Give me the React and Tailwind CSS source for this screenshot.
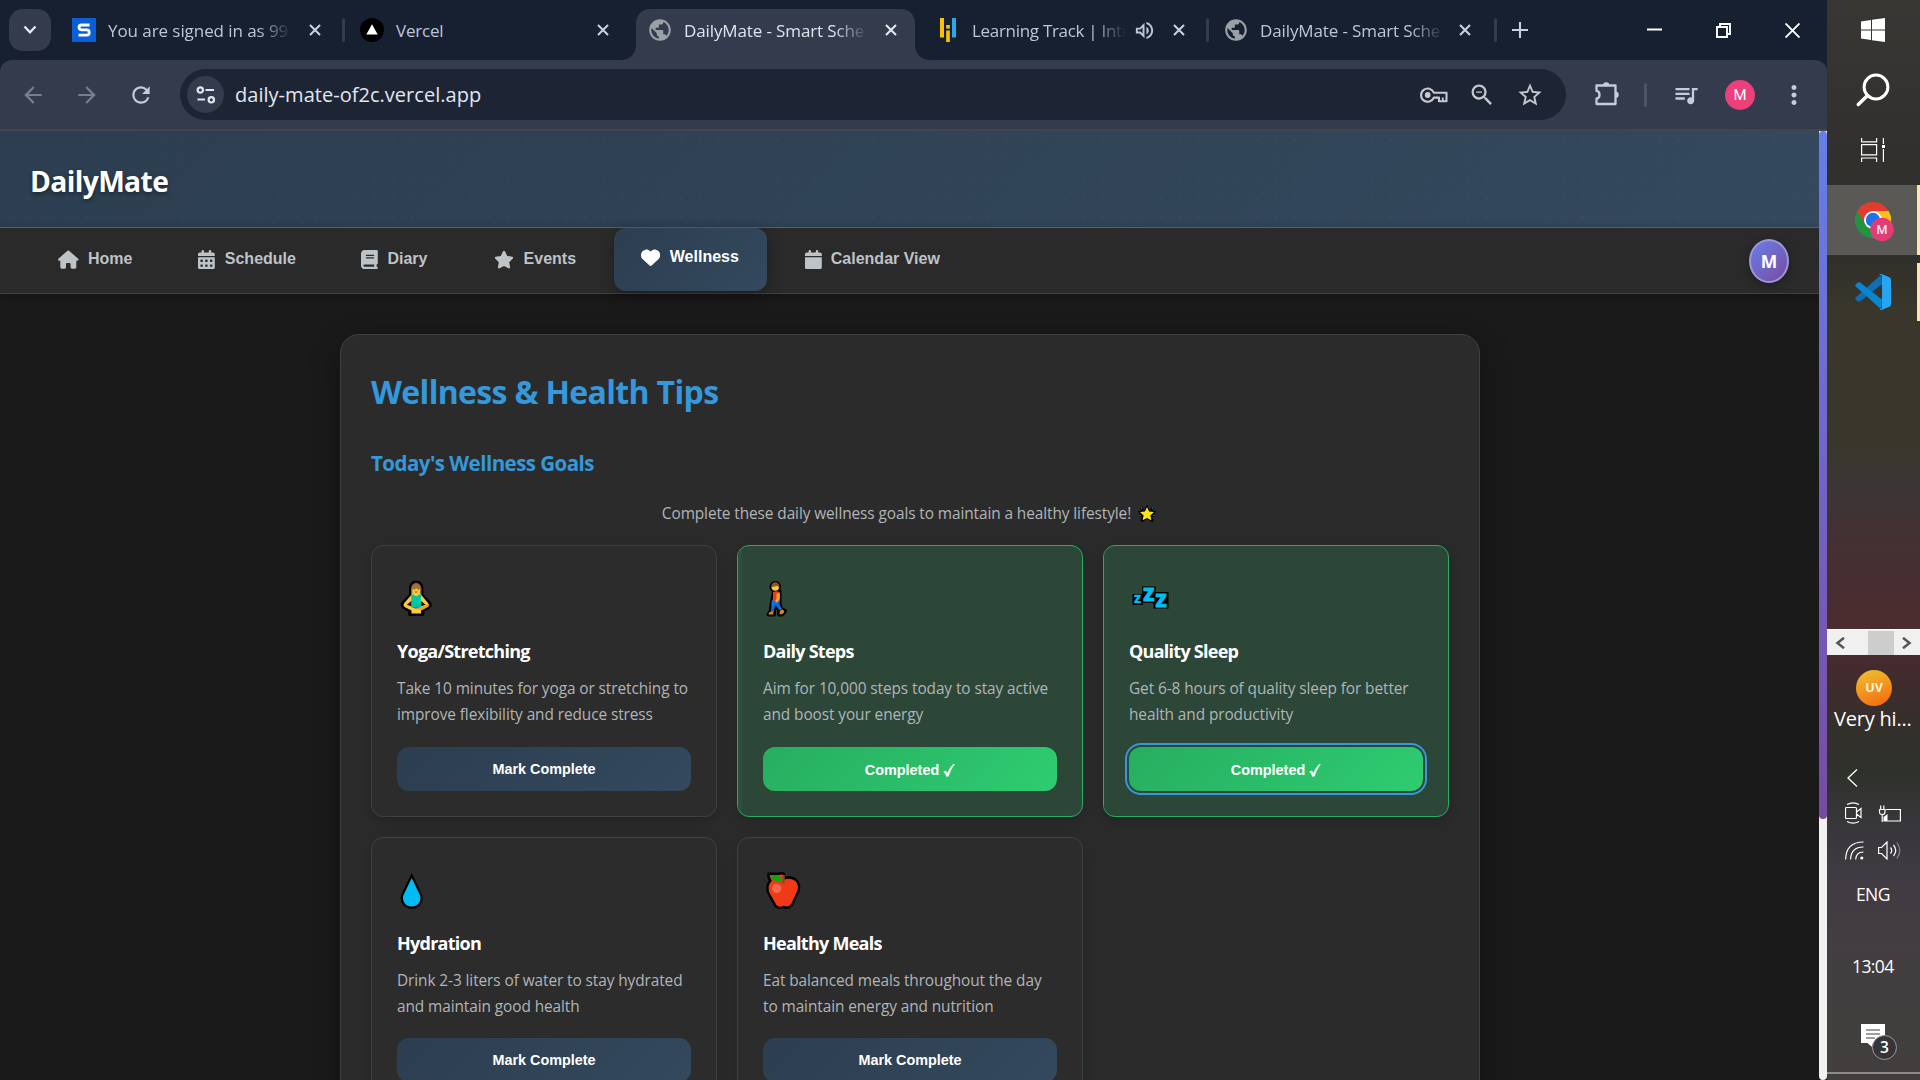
import React from "react";
import { FaHouse, FaCalendarDays, FaBook, FaStar, FaHeart, FaCalendar } from "react-icons/fa6";
import {
  MdArrowBack,
  MdArrowForward,
  MdRefresh,
  MdZoomOut,
  MdOutlineStarBorder,
  MdQueueMusic,
  MdMoreVert,
  MdPublic,
  MdOutlineVolumeUp,
} from "react-icons/md";

const Globe = () => (
  <div className="flex h-6 w-6 items-center justify-center text-[#9aa0a6]">
    <MdPublic className="h-[26px] w-[26px] shrink-0" />
  </div>
);

const CloseX = ({ className }) => (
  <svg viewBox="0 0 12 12" className={"h-3 w-3 shrink-0 " + className}>
    <path d="M1 1l10 10M11 1L1 11" stroke="currentColor" strokeWidth="2.1" />
  </svg>
);

const SqFavicon = () => (
  <svg viewBox="0 0 24 24" className="h-6 w-6">
    <rect width="24" height="24" fill="#0a5fd6" />
    <path d="M17.500 7H9.500Q7 7 7 9.300T9.500 11.800H15Q17.200 11.800 17.200 14.400T15 17.200H6.500" fill="none" stroke="#fff" strokeWidth="2.800" />
  </svg>
);
const VercelFavicon = () => (
  <svg viewBox="0 0 24 24" className="h-6 w-6">
    <circle cx="12" cy="12" r="12" fill="#000" />
    <path d="M12 6.200L17.700 16.600H6.300z" fill="#fff" />
  </svg>
);
const BarsFavicon = () => (
  <svg viewBox="0 0 24 24" className="h-6 w-6">
    <rect x="4" y="0" width="4" height="19.500" fill="#ffc107" />
    <rect x="10.200" y="7" width="3.600" height="3.600" fill="#ffc107" />
    <rect x="10.200" y="12.500" width="3.600" height="11.500" fill="#ffc107" />
    <rect x="16" y="0" width="4" height="19.500" fill="#29a9ea" />
  </svg>
);

function Tab({ icon, title, textWidth = "w-[184px]", tracking, divider, active, audio, last, fade = true }) {
  return (
    <div className="relative flex h-[60px] w-[288px] shrink-0 items-center">
      {active && (
        <div className="absolute top-[9px] bottom-0 left-[6px] w-[279px] rounded-t-[14px] bg-[#333b4c]">
          <div className="absolute bottom-0 -left-[14px] h-[14px] w-[14px] bg-[radial-gradient(circle_at_0_0,transparent_13.5px,#333b4c_14px)]" />
          <div className="absolute -right-[14px] bottom-0 h-[14px] w-[14px] bg-[radial-gradient(circle_at_100%_0,transparent_13.5px,#333b4c_14px)]" />
        </div>
      )}
      <div className={"h-6 w-[3px] rounded-full " + (divider ? "bg-[#333b4c]" : "bg-transparent")} />
      <div className="relative ml-[15px]">{icon}</div>
      <div
        className={
          "relative ml-3 whitespace-nowrap pt-[2px] text-[17px] leading-[62px] " +
          textWidth + " " + tracking + " " +
          (fade ? "[mask-image:linear-gradient(to_right,#000_calc(100%-34px),transparent)] " : "") +
          (active ? "text-[#dfe3ee]" : "text-[#bcc5da]")
        }
      >
        {title}
      </div>
      {audio && <MdOutlineVolumeUp className="ml-[7px] h-[23px] w-[23px] shrink-0 text-[#bcc5da]" />}
      <CloseX className={"relative ml-auto " + (last ? "mr-[23px] " : "mr-[21px] ") + (active ? "text-[#e6e9f2]" : "text-[#c8d0e2]")} />
    </div>
  );
}

function TabStrip() {
  return (
    <div className="flex h-[60px] items-center bg-[#172030]">
      <div className="ml-[9px] flex h-[42px] w-[42px] shrink-0 items-center justify-center rounded-[14px] bg-[#333b4c]">
        <svg viewBox="0 0 14 10" className="h-[10px] w-[14px]">
          <path d="M1.500 1.500L7 7.300l5.500-5.800" fill="none" stroke="#e6e9f2" strokeWidth="2.300" />
        </svg>
      </div>
      <div className="ml-[3px] flex">
        <Tab icon={<SqFavicon />} title="You are signed in as 99" tracking="tracking-[-0.07px]" />
        <Tab icon={<VercelFavicon />} title="Vercel" tracking="tracking-[-0.2px]" divider fade={false} />
        <Tab icon={<Globe />} title="DailyMate - Smart Sche" tracking="tracking-[-0.12px]" active />
        <Tab icon={<BarsFavicon />} title="Learning Track | Intr" tracking="tracking-[-0.3px]" textWidth="w-[154px]" audio />
        <Tab icon={<Globe />} title="DailyMate - Smart Sche" tracking="tracking-[-0.12px]" divider last />
      </div>
      <div className="h-6 w-[3px] rounded-full bg-[#333b4c]" />
      <svg viewBox="0 0 16 16" className="ml-[15px] h-4 w-4">
        <path d="M8 0v16M0 8h16" stroke="#c8d0e2" strokeWidth="2.100" />
      </svg>
      <svg viewBox="0 0 15 15" className="mr-[54px] ml-auto h-[15px] w-[15px]">
        <path d="M0 6.500h15" stroke="#fff" strokeWidth="2" />
      </svg>
      <svg viewBox="0 0 15 15" className="mr-[54px] h-[15px] w-[15px]">
        <path d="M1 4h10v10H1zM4 4V1h10v10h-3" fill="none" stroke="#fff" strokeWidth="1.900" />
      </svg>
      <svg viewBox="0 0 15 15" className="mr-[27px] h-[15px] w-[15px]">
        <path d="M.5.5l14 14M14.500.5l-14 14" stroke="#fff" strokeWidth="1.900" />
      </svg>
    </div>
  );
}

const slot = "flex h-[30px] w-[30px] shrink-0 items-center justify-center";

function Toolbar() {
  return (
    <div className="bg-[#172030]">
      <div className="flex h-[71px] items-start rounded-t-[12px] border-b-2 border-[#42454c] bg-[#333b4c]">
        <div className="flex h-[69px] w-full items-center">
          <div className={slot + " ml-[18px] text-[#767f92]"}><MdArrowBack size={26} /></div>
          <div className={slot + " ml-6 text-[#767f92]"}><MdArrowForward size={26} /></div>
          <div className={slot + " ml-6 text-[#c3cce0]"}><MdRefresh size={26} /></div>
          <div className="ml-6 flex h-[51px] w-[1386px] shrink-0 items-center rounded-full bg-[#1d2535]">
            <div className="ml-[7px] flex h-[37px] w-[37px] items-center justify-center rounded-full bg-[#333b4c]">
              <svg viewBox="0 0 20 18" className="h-[18px] w-5" fill="none" stroke="#e3e6ee" strokeWidth="2.200">
                <circle cx="4.300" cy="4" r="2.700" />
                <path d="M9.500 4H18M1.500 13.500H9" />
                <circle cx="15.300" cy="13.800" r="2.700" />
              </svg>
            </div>
            <div className="ml-[11px] text-[20px] leading-[50px] tracking-[0.03px] text-[#e3e6ee]">daily-mate-of2c.vercel.app</div>
            <div className={slot + " ml-auto"}>
              <svg viewBox="0 0 28 16" className="h-4 w-7" fill="none" stroke="#c7c9ce" strokeWidth="2.100">
                <path d="M13.800 5.700H26.500V14.300H19V10.600H13.800A6.600 6.600 0 1 1 13.800 5.700z" strokeLinejoin="round" />
                <path d="M22.800 14V10.500" strokeWidth="1.800" />
                <circle cx="7.700" cy="8" r="2.900" fill="#c7c9ce" stroke="none" />
              </svg>
            </div>
            <div className={slot + " ml-[18px] text-[#c7c9ce]"}><MdZoomOut size={28} /></div>
            <div className={slot + " mr-[21px] ml-[18px] text-[#c7c9ce]"}><MdOutlineStarBorder size={28} /></div>
          </div>
          <div className={slot + " ml-[26px]"}>
            <svg viewBox="0 0 28 28" className="h-7 w-7 -translate-y-0.5">
              <path
                d="M3.500 6.500h19v18.500H3.500v-5.300c4-.6 4-7.300 0-7.900z"
                fill="none" stroke="#c3cce0" strokeWidth="2.300" strokeLinejoin="round"
              />
              <path d="M10 6.500a3.200 3.200 0 0 1 6.400 0zM22.500 12.500a3.200 3.200 0 0 1 0 6.400z" fill="#c3cce0" />
            </svg>
          </div>
          <div className="ml-[22px] h-6 w-[3px] rounded-full bg-[#4b5366]" />
          <div className={slot + " ml-6 text-[#c3cce0]"}><MdQueueMusic size={28} /></div>
          <div className="ml-6 flex h-[30px] w-[30px] items-center justify-center rounded-full bg-[#ec407a] pt-px font-[Roboto] text-[15px] text-white">M</div>
          <div className={slot + " ml-6 text-[#c3cce0]"}><MdMoreVert size={30} /></div>
        </div>
      </div>
    </div>
  );
}

const navItems = [
  { label: "Home", icon: FaHouse, w: "w-[140px]", iw: "w-[20.6px]", gap: "gap-[9.4px]" },
  { label: "Schedule", icon: FaCalendarDays, w: "w-[163px]", iw: "w-[16.8px]", gap: "gap-[10px]" },
  { label: "Diary", icon: FaBook, w: "w-[133px]", iw: "w-[16.8px]", gap: "gap-[9.6px]" },
  { label: "Events", icon: FaStar, w: "w-[147px]", iw: "w-[20px]", gap: "gap-[9.6px]" },
  { label: "Wellness", icon: FaHeart, active: true, w: "w-[153px]", iw: "w-[19.2px]", gap: "gap-[9.6px]" },
  { label: "Calendar View", icon: FaCalendar, w: "w-[190px]", iw: "w-[16.8px]", gap: "gap-[9px]" },
];

function Nav() {
  return (
    <div className="flex h-[66px] items-start border-b border-[#424242] bg-[#2a2a2a] pl-[31px] shadow-[0_2px_10px_rgba(0,0,0,0.3)]">
      {navItems.map(({ label, icon: Icon, active, w, iw, gap }) => (
        <div
          key={label}
          className={
            "flex shrink-0 items-center pl-[27px] font-['Liberation_Sans',Arial,sans-serif] text-[16px] font-bold " +
            w + " " + gap + " " +
            (active
              ? "mr-[11px] h-[63px] rounded-[12px] bg-linear-135 from-[#2c3e50] to-[#34495e] pb-[5px] text-white shadow-[0_4px_14px_rgba(0,0,0,0.3)]"
              : "h-[61px] text-[#bdc3c7]")
          }
        >
          <Icon className={"h-[19.2px] shrink-0 translate-y-[1px] " + iw} />
          {label}
        </div>
      ))}
      <div className="mt-[11px] mr-[30px] ml-auto flex h-[44px] w-[40px] items-center justify-center rounded-[50%] border-2 border-[#9d96d8] bg-linear-135 from-[#667eea] to-[#764ba2] text-[17.500px] font-bold text-white shadow-[0_2px_10px_rgba(0,0,0,0.3)]">
        M
      </div>
    </div>
  );
}

const emojiCls = "block h-10 w-10 overflow-visible";

const Yoga = () => (
  <svg viewBox="0 0 40 40" className={emojiCls}>
    <g fill="#000" stroke="#000" strokeWidth="4" strokeLinejoin="round">
      <path d="M14 16V9a5.200 5.500 0 0 1 10.400 0v7l8 8.500q1 2-1 3.500l-6 3.500v3.500H13V31.500L7 28q-2-1.500-1-3.500z" />
    </g>
    <path d="M14 16.500V9.500a5.200 5.800 0 0 1 10.400 0v7z" fill="#8f562e" />
    <path d="M15.300 14.500V9.800q4-1 7.800 0v4.700l7.900 9.500q2 2.500-1 4l-6 3.500v3H14.500v-3l-6-3q-3.500-2-1-4.800l7-8z" fill="#ffc83d" />
    <path d="M9.800 25.700l5-4.200v6zM28.600 25.700l-5-4.200v6z" fill="#1a1200" />
    <path d="M14.300 15.500h2.200q2.700 3.500 5.400 0H24v13h-9.700z" fill="#00c8a0" />
    <path d="M14.500 27.800h9.500l-4.500 2.400z" fill="#2d7fe0" />
    <path d="M31 25q2 2-1 3.500l-5.500 2.800-6-1.800 9-2.500z" fill="#f0a400" />
    <path d="M14.800 9.800q-.3-4.500 4.400-4.700 4.600.2 4.400 4.700-4-1.300-8.800 0z" fill="#a56b43" />
    <path d="M16.800 10.300h1.400M20.600 10.300H22M17.800 12.800q1.400.8 2.800 0" stroke="#7a3f10" strokeWidth=".8" fill="none" />
  </svg>
);

const Walker = () => (
  <svg viewBox="0 0 40 40" className={emojiCls}>
    <g fill="#000" stroke="#000" strokeWidth="4" strokeLinejoin="round">
      <circle cx="12.300" cy="7.800" r="3.800" />
      <path d="M11 12.500h5.500V25l1.500 5 4 2-3 3.500h-3v-5l-3-3.500-2 3.500V35.500H5.500l2-3 1.500-9z" />
    </g>
    <path d="M8.500 23q.2-2.500 1.700-3h6.500v4.500l-.2 1 2.500 4.500-2.200 1.500-4.300-5.500-1.500 4-.2 3H8.200z" fill="#0b6fe0" />
    <path d="M10 13q3-1.500 6.800 0v9.500H10z" fill="#f03a17" />
    <path d="M13.500 14.500h3.200v5.500l-3 3.500-1.500-1.300 1.300-2.700z" fill="#ffb02e" />
    <path d="M5.500 35.500q0-2.500 2.800-3l2 .3v2.700zM16.500 35.300l.3-3.300 2.800-1.700 1.800 1.900q-.5 2.100-2.400 3.100z" fill="#d08c12" />
    <circle cx="12.300" cy="8" r="3.800" fill="#ffc83d" />
    <path d="M8.400 8.300q0-5 4-5 4.300.3 3.900 6l-1.400-2.300q-3.500.6-6.500 1.300z" fill="#8f562e" />
  </svg>
);

const Zzz = () => (
  <svg viewBox="0 0 40 40" className={emojiCls}>
    <g fill="#000">
      <path d="M3.500 15h9.500V7.500h14v5.500H39.500v16.500H24.500V24H14v2H3.500z" />
    </g>
    <g fill="#00bcf2" stroke="#00bcf2" fontFamily="Open Sans" fontWeight="800">
      <text x="5.200" y="24.200" fontSize="10.500" strokeWidth=".6">Z</text>
      <text x="14.300" y="22.300" fontSize="18" strokeWidth="1">Z</text>
      <text x="26.600" y="27.800" fontSize="18" strokeWidth="1">Z</text>
    </g>
  </svg>
);

const Drop = () => (
  <svg viewBox="0 0 40 40" className={emojiCls}>
    <path d="M14.700 4.500L6.500 21.500C2 29.500 7.500 36.700 14.700 36.700S27.400 29.500 22.900 21.500z" fill="#00bcf2" stroke="#000" strokeWidth="2.200" />
  </svg>
);

const Apple = () => (
  <svg viewBox="0 0 40 40" className={emojiCls}>
    <path
      d="M5.500 2.800H15l3.500-.5q2.500-.5 2.700 2V7.300Q29 5 33.500 9.500q4 4.500 2 10.500l-6.300 13.800Q26 38 20.500 36q-4.500 2.200-8-1.200L5 21.500Q3.200 13.500 7.500 9.700 5 7 5.500 2.800z"
      fill="#f03a17" stroke="#000" strokeWidth="2.400" strokeLinejoin="round"
    />
    <path d="M6.800 4h5q6.500.3 8 7-10.500 1-13-7z" fill="#13a10e" />
    <path d="M20.500 4v8.500" stroke="#8a4b22" strokeWidth="2.500" />
    <circle cx="13.700" cy="17.500" r="4.600" fill="#f4694e" />
  </svg>
);

const Sparkle = () => (
  <svg viewBox="0 0 18 18" className="h-[18px] w-[18px]">
    <path d="M3 2.500l2 3M15 2.500l-2 3M1 10.500l3.500-.5M17 10.500L13.500 10M5 13.500L3.500 16M13 13.500l1.500 2.500" stroke="#000" strokeWidth="3" />
    <path d="M9 2l2.100 4.500 4.900.6-3.600 3.300 1 4.900L9 12.900l-4.400 2.400 1-4.900L2 7.100l4.900-.6z" fill="#ffe11a" stroke="#000" strokeWidth="2.200" paintOrder="stroke" />
    <path d="M3 2.500l1.200 1.700M15 2.500l-1.200 1.700M1.300 10.700l1.500-.3M16.700 10.700l-1.500-.3" stroke="#1b7fa8" strokeWidth="1.200" />
  </svg>
);

const goals = [
  { icon: <Yoga />, title: "Yoga/Stretching", lines: ["Take 10 minutes for yoga or stretching to", "improve flexibility and reduce stress"] },
  { icon: <Walker />, title: "Daily Steps", lines: ["Aim for 10,000 steps today to stay active", "and boost your energy"], done: true },
  { icon: <Zzz />, title: "Quality Sleep", lines: ["Get 6-8 hours of quality sleep for better", "health and productivity"], done: true, focused: true },
  { icon: <Drop />, title: "Hydration", lines: ["Drink 2-3 liters of water to stay hydrated", "and maintain good health"], low: true },
  { icon: <Apple />, title: "Healthy Meals", lines: ["Eat balanced meals throughout the day", "to maintain energy and nutrition"], low: true },
];

function GoalCard({ icon, title, lines, done, focused, low }) {
  return (
    <div
      className={
        "relative h-[272px] overflow-hidden rounded-[12px] border px-[25px] pt-[33px] shadow-[0_4px_14px_rgba(0,0,0,0.18)] " +
        (done ? "border-[#27ae60] bg-[#2c4637]" : "border-[#404040] bg-[#2c2c2c]")
      }
    >
      {done && <div className={"absolute inset-y-0 left-0 w-1 " + (focused ? "bg-[#2c4a39]" : "bg-[#2c503d]")} />}
      {icon}
      <div className="mt-[18px] text-[18px] leading-7 font-bold tracking-[-0.74px] whitespace-nowrap text-white">{title}</div>
      <div className="mt-[11px] text-[15.400px] leading-[26px] tracking-[-0.085px] whitespace-nowrap text-[#b1b5b8]">
        {lines.map((l) => (
          <div key={l}>{l}</div>
        ))}
      </div>
      <button
        className={
          "flex h-[44px] w-full items-center justify-center rounded-[12px] font-['Liberation_Sans',Arial,sans-serif] text-[14.400px] font-bold text-white " +
          (low ? "mt-[18px] " : "mt-[19px] ") +
          (done ? "bg-linear-135 from-[#27ae60] to-[#2ecc71] pt-[3px] " : "bg-linear-135 from-[#2c3e50] to-[#34495e] pt-[2px] ") +
          (focused ? "outline-2 outline-offset-2 outline-[#3498db]" : "")
        }
      >
        {done ? "Completed" : "Mark Complete"}
        {done && (
          <svg viewBox="0 0 12 13" className="ml-1 h-[13px] w-3 overflow-visible">
            <path d="M.8 7.800L2.900 6.900 4.400 9.600Q6.500 4 10 .6L11.400.4Q8 4.500 5.300 12.200L3.600 12.400Q2.600 9.700.8 7.800z" fill="#fff" stroke="#fff" strokeWidth=".5" />
          </svg>
        )}
      </button>
    </div>
  );
}

function Page() {
  return (
    <div className="h-[949px] w-[1819px] overflow-hidden bg-[#1a1a1a]">
      <div className="h-[97px] border-b border-[#5b6c7b] bg-linear-135 from-[#2c3e50] to-[#34495e]">
        <div className="h-full bg-[radial-gradient(circle_at_9.6px_9.6px,rgba(255,255,255,0.028)_1px,transparent_1.4px)] bg-size-[19.2px_19.2px] pt-[31px] pl-[30px]">
          <div className="text-[28.200px] leading-[38px] font-bold tracking-[-0.6px] text-white [text-shadow:0_2px_4px_rgba(0,0,0,0.4)]">DailyMate</div>
        </div>
      </div>
      <Nav />
      <div className="mt-10 ml-[340px] h-[900px] w-[1140px] rounded-[19px] border border-[#404040] bg-[#2b2b2b] px-[30px] pt-[35px] shadow-[0_8px_32px_rgba(0,0,0,0.3)]">
        <div className="text-[32px] leading-[44px] font-bold text-[#3498db]"><span className="tracking-[-0.66px]">Wellness &amp; Health Tips</span></div>
        <div className="mt-[35px] text-[20.500px] leading-7 font-bold text-[#3498db]"><span className="tracking-[-0.53px]">Today's Wellness Goals</span></div>
        <div className="mt-[24px] flex h-[26px] items-center justify-center pr-[2px] text-[15.400px] leading-[26px] tracking-[-0.09px] text-[#b1b5b8]">
          <span>Complete these daily wellness goals to maintain a healthy lifestyle!</span>
          <span className="ml-[7px]"><Sparkle /></span>
        </div>
        <div className="mt-[18px] grid grid-cols-3 gap-5">
          {goals.map((g) => (
            <GoalCard key={g.title} {...g} />
          ))}
        </div>
      </div>
    </div>
  );
}

function Taskbar() {
  return (
    <div className="flex h-[1080px] w-[93px] flex-col overflow-hidden bg-[linear-gradient(to_bottom,#383734_0px,#32312f_130px,#2f2e2a_250px,#39372b_310px,#39372b_440px,#3b3535_490px,#443032_540px,#4b2c2f_630px,#402b2d_680px,#33302a_730px,#2f312b_770px,#37363a_820px,#403b42_880px,#423e40_960px,#413e3d_1080px)] text-white">
      <div className="flex h-[60px] items-center justify-center pr-px">
        <svg viewBox="0 0 24 24" className="h-6 w-6" fill="#fff">
          <path d="M0 3.400L10 2v9.400H0zM11 1.800L24 0v11.400H11zM0 12.500h10V22L0 20.600zM11 12.500h13V24l-13-1.800z" />
        </svg>
      </div>
      <div className="flex h-[60px] items-center justify-center pr-px">
        <svg viewBox="0 0 34 34" className="h-[34px] w-[34px]" fill="none" stroke="#fff" strokeLinecap="round">
          <circle cx="20" cy="14" r="11.900" strokeWidth="3" />
          <path d="M11.500 22.500L2.300 31.500" strokeWidth="3.400" />
        </svg>
      </div>
      <div className="mb-[5px] flex h-[60px] items-center justify-center pr-px">
        <svg viewBox="0 0 24 24" className="h-6 w-6" fill="none" stroke="#fff" strokeWidth="1.200">
          <path d="M.6 0v3.800h15V0M.6 6.700h15v10.200h-15zM.6 24v-4h15v4M22.400 0v6M22.400 11v13" />
          <rect x="21" y="7" width="3" height="3" fill="#fff" stroke="none" />
        </svg>
      </div>
      <div className="flex h-[70px] items-center border-r-[3px] border-[#f7e9a8] bg-[#5a5955] pt-1 pl-7">
        <svg viewBox="0 0 40 40" className="h-10 w-10">
          <circle cx="18" cy="18" r="18" fill="#229342" />
          <path d="M2.400 9A18 18 0 0 1 33.600 9H18L10.200 22.500z" fill="#e33b2e" />
          <path d="M33.600 9A18 18 0 0 1 18 36L25.800 22.500 18 9z" fill="#fbc116" />
          <circle cx="18" cy="18" r="9" fill="#fff" />
          <circle cx="18" cy="18" r="7.200" fill="#1a73e8" />
          <circle cx="27" cy="27.500" r="11.800" fill="#e23c76" />
          <text x="27" y="32" textAnchor="middle" fontSize="12.500" fontWeight="500" fontFamily="Roboto" fill="#f6e6ec">M</text>
        </svg>
      </div>
      <div className="mt-2 flex h-[58px] items-center border-r-[3px] border-[#f7e9a8] pl-7">
        <svg viewBox="0 0 36 36" className="h-9 w-9">
          <path d="M26 .7L27 10 5 27.500q-1 .7-2 0L.7 25.400q-1-1 0-2z" fill="#0d6fb5" />
          <path d="M.7 12.600q-1-1 0-2L3 8.500q1-.7 2 0L27 25.500 26 35.300z" fill="#0a86d1" />
          <path d="M26.500 0L34.500 3.300Q36 4 36 5.800V30.200Q36 32 34.500 32.700L26.500 36q-1.500.3-2.200-.9 2.700.9 2.700-1.500V2.400Q27 0 24.300.9 25-.3 26.500 0z" fill="#27a5f2" />
        </svg>
      </div>
      <div className="mt-[308px] flex h-[26px] items-center border-t border-white bg-[#f0f0f0]">
        <svg viewBox="0 0 10 12" className="ml-2 h-3 w-[10px]"><path d="M9 .8L2.500 6 9 11.200" fill="none" stroke="#555" strokeWidth="2.500" /></svg>
        <div className="ml-[23px] h-6 w-[26px] bg-[#cdcdcd]" />
        <svg viewBox="0 0 10 12" className="ml-2 h-3 w-[10px]"><path d="M1 .8L7.500 6 1 11.200" fill="none" stroke="#555" strokeWidth="2.500" /></svg>
      </div>
      <div className="mt-[15px] ml-[29px] flex h-9 w-9 items-center justify-center rounded-full bg-linear-160 from-[#edc22e] to-[#f2620f] text-[12.500px] font-bold text-[#fff3d6]">UV</div>
      <div className="ml-[7px] text-[20px] leading-[26px] tracking-[-0.2px] whitespace-nowrap">Very hi...</div>
      <svg viewBox="0 0 11 18" className="mt-[37px] ml-5 h-[18px] w-[11px]"><path d="M10 .5L1 9l9 8.500" fill="none" stroke="#fff" strokeWidth="1.300" /></svg>
      <div className="mt-[15px] flex h-[22px] items-center">
        <svg viewBox="0 0 17 22" className="ml-[18px] h-[22px] w-[17px]" fill="none" stroke="#fff" strokeWidth="1.200">
          <path d="M2 2.500Q8 -.7 14 2.500M2 19.500q6 3.200 12 0M1.500 5.500h9q1 0 1 1v9q0 1-1 1h-9q-1 0-1-1v-9q0-1 1-1zM11.500 10l4.500-3.500v9L11.500 12" />
        </svg>
        <svg viewBox="0 0 23 17" className="ml-4 h-[17px] w-[23px]" fill="none" stroke="#fff" strokeWidth="1.200">
          <path d="M8 4.500h14.400v11.500H5.500M1.500 4.500h5.500v2.500q0 2.500-2.800 2.500T1.500 7zM2.700 4.500V.5M5.800 4.500V.5M4.200 9.500V17" />
          <path d="M5.500 16L5.500 12l4-3v7z" fill="#fff" stroke="none" />
        </svg>
      </div>
      <div className="mt-4 flex h-5 items-center">
        <svg viewBox="0 0 19 19" className="ml-[18px] h-[19px] w-[19px]" fill="none" stroke="#fff" strokeWidth="1.200">
          <path d="M.6 18.500Q1 1 18.500 1M5.600 18.500Q6 6 18.500 6M10.600 18.500q.5-7.500 7.900-7.500" />
          <circle cx="16.800" cy="17" r="1.600" fill="#fff" stroke="none" />
        </svg>
        <svg viewBox="0 0 23 19" className="ml-[14px] h-[19px] w-[23px]" fill="none" stroke="#fff" strokeWidth="1.200">
          <path d="M.6 6.500h3L9 1v17l-5.400-5.500h-3zM12.500 6.500q2.500 3 0 6M15.500 4q4.500 5.500 0 11" />
          <path d="M18.800 1.500q6 8 0 16" stroke="#8a8a8e" />
        </svg>
      </div>
      <div className="mt-[21px] ml-[29px] text-[17.500px] leading-[26px] tracking-[-0.6px]">ENG</div>
      <div className="mt-[46px] ml-[25px] text-[17.500px] leading-[26px] tracking-[-0.6px]">13:04</div>
      <div className="relative mt-[45px] ml-[34px] h-[37px] w-[37px]">
        <svg viewBox="0 0 24 24" className="h-6 w-6">
          <path d="M0 0h24v19H12l-1 4-4.500-4H0z" fill="#fff" />
          <path d="M5 6h14M5 10h14M5 14h9" stroke="#413e40" strokeWidth="1.100" />
        </svg>
        <div className="absolute top-[11px] left-[11px] flex h-[25px] w-[25px] items-center justify-center rounded-full border border-[#98989a] bg-[#363438] text-[15.500px] leading-none font-semibold">3</div>
      </div>
      <div className="mt-[11px] h-[2px] shrink-0 bg-[#8e8c8b]" />
    </div>
  );
}

export default function App() {
  return (
    <div className="flex h-[1080px] w-[1920px] overflow-hidden bg-[#1a1a1a] font-['Open_Sans','Noto_Sans',sans-serif]">
      <div className="flex w-[1827px] shrink-0 flex-col">
        <TabStrip />
        <Toolbar />
        <div className="flex">
          <Page />
          <div className="h-[949px] w-2 rounded-b-[4px] bg-[#f1f1f1]">
            <div className="h-[688px] w-2 rounded-[4px] bg-linear-to-b from-[#667eea] to-[#764ba2]" />
          </div>
        </div>
      </div>
      <Taskbar />
    </div>
  );
}
